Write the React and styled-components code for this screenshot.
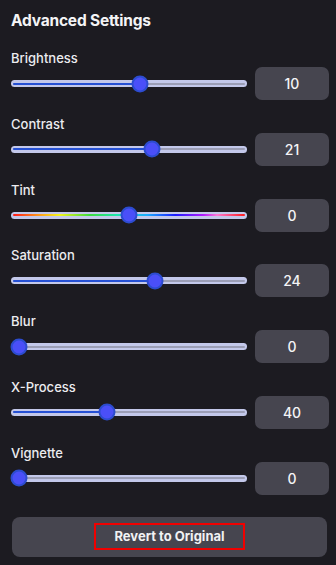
import React from "react";
import styled, { createGlobalStyle } from "styled-components";

const GlobalStyle = createGlobalStyle`
  body {
    margin: 0;
    background: #1c1b21;
    font-family: Inter, "Noto Sans", sans-serif;
    color: #f2f2f4;
  }
`;

const Panel = styled.div`
  width: 336px;
  height: 565px;
  box-sizing: border-box;
  padding: 10px 7px 0 11px;
  background: #1c1b21;
  display: flex;
  flex-direction: column;
`;

const Title = styled.h2`
  margin: 0 0 18px;
  font-size: 15.5px;
  line-height: 22px;
  font-weight: 700;
  letter-spacing: -0.2px;
  color: #f4f4f6;
`;

const Section = styled.div`
  display: flex;
  flex-direction: column;
  gap: 1px;
  margin-bottom: 15.8px;
`;

const Label = styled.div`
  font-size: 13px;
  line-height: 16px;
  font-weight: 500;
  color: #ececf0;
`;

const Row = styled.div`
  display: flex;
  align-items: center;
  gap: 8px;
  height: 33px;
`;

const Track = styled.div`
  position: relative;
  flex: 1;
  height: 7px;
  border-radius: 4px;
  background: #c3c8ea;
`;

const Line = styled.div`
  position: absolute;
  left: 2px;
  right: 2px;
  top: 2.5px;
  height: 2px;
  border-radius: 1px;
  background: ${(p) =>
    p.$rainbow
      ? "linear-gradient(90deg, #ff1a1a 0%, #ffa21a 12%, #f5f51a 20%, #3cdc3c 33%, #1ae6b0 45%, #1aaaff 58%, #1a1aff 70%, #b21aff 82%, #ff7ad2 88%, #ff1a1a 100%)"
      : "#9b9eb6"};
`;

const Fill = styled.div`
  position: absolute;
  left: 2px;
  top: 2.5px;
  height: 2px;
  border-radius: 1px;
  background: #2550d4;
`;

const Thumb = styled.div`
  position: absolute;
  top: 50%;
  width: 13px;
  height: 13px;
  border-radius: 50%;
  background: #4a4ff8;
  border: 2px solid #2c4ccf;
  transform: translate(-50%, -50%);
`;

const ValueBox = styled.div`
  width: 74px;
  height: 33px;
  border-radius: 7px;
  background: #46454f;
  display: flex;
  align-items: center;
  justify-content: center;
  font-size: 14px;
  font-weight: 500;
  color: #f4f4f6;
`;

const Revert = styled.button`
  margin: 6px 2px 0 1px;
  height: 40px;
  border: none;
  border-radius: 8px;
  background: #46454f;
  display: flex;
  align-items: center;
  justify-content: center;
  cursor: pointer;
  font-family: inherit;
`;

const RevertText = styled.span`
  border: 2px solid #f00000;
  padding: 4px 18px;
  font-size: 13px;
  line-height: 15px;
  font-weight: 700;
  color: #f1f1f3;
`;

const SETTINGS = [
  { name: "Brightness", value: 10, min: -100, max: 100 },
  { name: "Contrast", value: 21, min: -100, max: 100 },
  { name: "Tint", value: 0, min: -100, max: 100, rainbow: true },
  { name: "Saturation", value: 24, min: -100, max: 100 },
  { name: "Blur", value: 0, min: 0, max: 100 },
  { name: "X-Process", value: 40, min: 0, max: 100 },
  { name: "Vignette", value: 0, min: 0, max: 100 },
];

const Slider = ({ value, min, max, rainbow }) => {
  const pct = (value - min) / (max - min);
  // thumb travels inside the track, 8px from each end
  const left = `calc(8px + ${pct} * (100% - 16px))`;
  return (
    <Track>
      <Line $rainbow={rainbow} />
      {!rainbow && <Fill style={{ width: `calc(${left} - 2px)` }} />}
      <Thumb style={{ left }} />
    </Track>
  );
};

const App = () => (
  <Panel>
    <GlobalStyle />
    <Title>Advanced Settings</Title>
    {SETTINGS.map((s) => (
      <Section key={s.name}>
        <Label>{s.name}</Label>
        <Row>
          <Slider {...s} />
          <ValueBox>{s.value}</ValueBox>
        </Row>
      </Section>
    ))}
    <Revert>
      <RevertText>Revert to Original</RevertText>
    </Revert>
  </Panel>
);

export default App;
